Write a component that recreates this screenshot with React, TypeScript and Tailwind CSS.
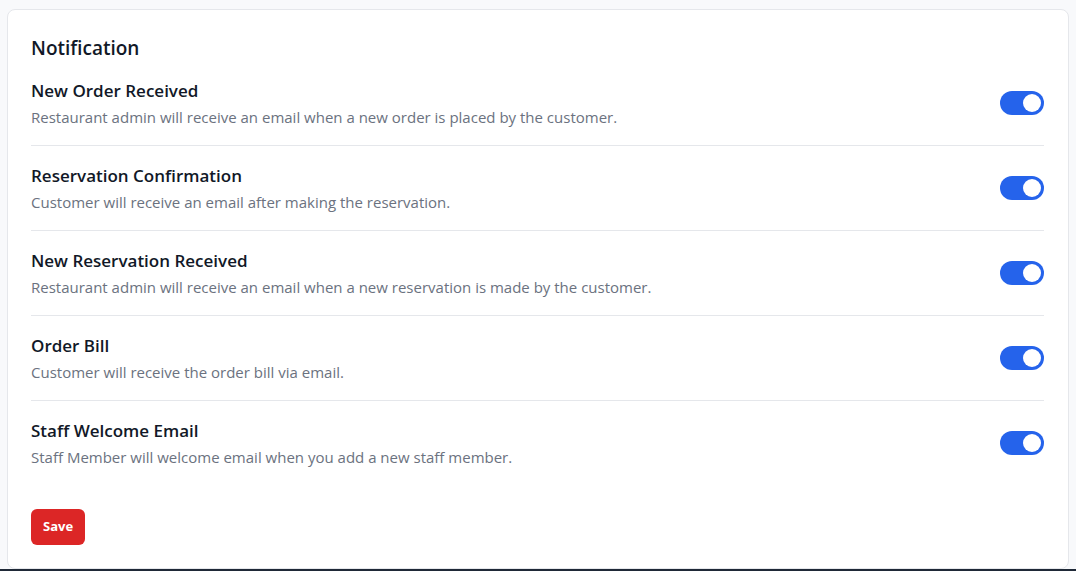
import { useState } from "react";

const items = [
  {
    title: "New Order Received",
    desc: "Restaurant admin will receive an email when a new order is placed by the customer.",
  },
  {
    title: "Reservation Confirmation",
    desc: "Customer will receive an email after making the reservation.",
  },
  {
    title: "New Reservation Received",
    desc: "Restaurant admin will receive an email when a new reservation is made by the customer.",
  },
  {
    title: "Order Bill",
    desc: "Customer will receive the order bill via email.",
  },
  {
    title: "Staff Welcome Email",
    desc: "Staff Member will welcome email when you add a new staff member.",
  },
];

function Toggle({ on, onClick }: { on: boolean; onClick: () => void }) {
  return (
    <button
      onClick={onClick}
      className={`relative h-6 w-11 shrink-0 rounded-full ${on ? "bg-[#2563eb]" : "bg-gray-300"}`}
    >
      <span
        className={`absolute top-[3px] h-[18px] w-[18px] rounded-full bg-white ${on ? "right-[3px]" : "left-[3px]"}`}
      />
    </button>
  );
}

export default function App() {
  const [enabled, setEnabled] = useState(items.map(() => true));

  return (
    <div
      className="flex h-[571px] flex-col bg-[#f8f9fb] text-[#111827]"
      style={{ fontFamily: '"Open Sans", "Noto Sans", sans-serif' }}
    >
      <div className="flex-1 px-[7px] pt-[9px]">
        <div className="h-[560px] rounded-lg border border-[#e5e7eb] bg-white pt-6 pr-6 pl-[23px]">
          <h2 className="text-[19px] leading-7 font-semibold">Notification</h2>

          <div className="divide-y divide-[#e5e7eb]">
            {items.map((item, i) => (
              <div
                key={item.title}
                className={`flex items-center justify-between pb-[18px] ${i === 0 ? "pt-[17px]" : "pt-[18px]"}`}
              >
                <div>
                  <h3 className="text-[17px] leading-6 font-semibold">{item.title}</h3>
                  <p className="mt-1 text-[15px] leading-5 text-[#6b7280]">{item.desc}</p>
                </div>
                <Toggle
                  on={enabled[i]}
                  onClick={() =>
                    setEnabled((prev) => prev.map((v, j) => (j === i ? !v : v)))
                  }
                />
              </div>
            ))}
          </div>

          <button className="mt-6 h-9 rounded-md bg-[#dc2626] px-3 text-[13px] font-bold text-white">
            Save
          </button>
        </div>
      </div>
      <div className="h-[2px] bg-[#1f2937]" />
    </div>
  );
}
